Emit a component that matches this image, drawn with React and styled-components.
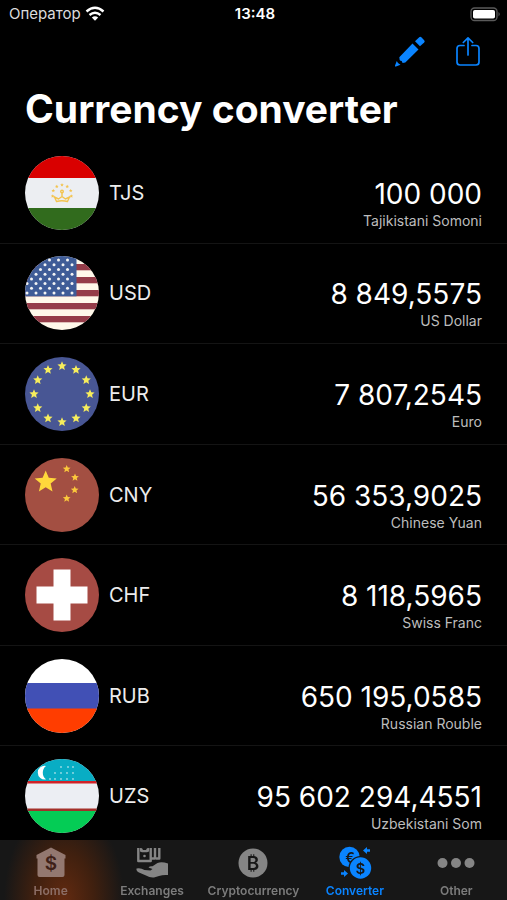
import React from 'react'

import styled, { createGlobalStyle } from 'styled-components'

const star = (cx, cy, r) => {
  const points = []
  for (let i = 0; i < 10; i++) {
    const radius = i % 2 ? r * 0.45 : r
    const angle = (Math.PI / 5) * i - Math.PI / 2
    points.push(`${cx + radius * Math.cos(angle)},${cy + radius * Math.sin(angle)}`)
  }
  return points.join(' ')
}

const ring = (count, radius, cx, cy, from, to) =>
  Array.from({ length: count }, (_, i) => {
    const a = ((from + ((to - from) * i) / (count - 1)) * Math.PI) / 180
    return [cx + radius * Math.cos(a), cy + radius * Math.sin(a)]
  })

const usStars = []
for (let row = 0; row < 8; row++) {
  for (let col = 0; col < 6; col++) {
    usStars.push([47 - col * 9 - (row % 2 ? 4.5 : 0), 37 - row * 4.7])
  }
}

const uzStars = [
  [43, 8], [48, 8], [36, 8],
  [30, 14], [36, 14], [42, 14], [48, 14],
  [25, 20], [30, 20], [36, 20], [42, 20], [48, 20],
]

const flags = {
  TJS: (
    <>
      <rect width="74" height="74" fill="#eceef2" />
      <rect width="74" height="22" fill="#d90000" />
      <rect y="52" width="74" height="22" fill="#316b1d" />
      <g fill="#f3c34d">
        {ring(7, 9.5, 37, 38.5, -190, 10).map(([x, y]) => (
          <polygon key={x} points={star(x, y, 1.9)} />
        ))}
      </g>
      <g fill="none" stroke="#f3c34d" strokeWidth="1.4">
        <path d="M29.5 41l2 4.500q5.500-1.500 11 0l2-4.500-4 2-3.500-2.500-3.500 2.500zM37 40.500V37" />
        <circle cx="37" cy="35.500" r="1.300" />
      </g>
    </>
  ),
  USD: (
    <>
      <rect width="74" height="74" fill="#fff8ea" />
      {[8, 21, 34, 47, 60].map((y) => (
        <rect key={y} y={y} width="74" height="6.300" fill="#953c49" />
      ))}
      <rect width="51.500" height="40.300" fill="#3f5c97" />
      {usStars.map(([x, y]) => (
        <circle key={`${x}-${y}`} cx={x} cy={y} r="1.500" fill="#f4f4f4" />
      ))}
    </>
  ),
  EUR: (
    <>
      <rect width="74" height="74" fill="#485694" />
      {ring(13, 28, 37, 37, 0, 360).slice(1).map(([x, y]) => (
        <polygon key={`${x}-${y}`} points={star(x, y, 4.800)} fill="#f7ed5c" />
      ))}
    </>
  ),
  CNY: (
    <>
      <rect width="74" height="74" fill="#a34f42" />
      <polygon points={star(20.700, 24, 11.600)} fill="#ffd83b" />
      {[[41.7, 11], [50, 19.5], [49.7, 32], [41.7, 40.5]].map(([x, y]) => (
        <polygon key={y} points={star(x, y, 4.100)} fill="#fbc83c" />
      ))}
    </>
  ),
  CHF: (
    <>
      <rect width="74" height="74" fill="#a64b44" />
      <path d="M28.500 11.500h17v17h17v17h-17v17h-17v-17h-17v-17h17z" fill="#fff" />
    </>
  ),
  RUB: (
    <>
      <rect width="74" height="74" fill="#fff" />
      <rect y="24" width="74" height="26" fill="#4150b5" />
      <rect y="49.500" width="74" height="25" fill="#ff3d00" />
    </>
  ),
  UZS: (
    <>
      <rect width="74" height="74" fill="#eceef3" />
      <rect width="74" height="22" fill="#08adc4" />
      <rect y="22" width="74" height="2.500" fill="#d02228" />
      <rect y="49.500" width="74" height="2.500" fill="#a3302a" />
      <rect y="52" width="74" height="22" fill="#04cc55" />
      <path d="M21 7a6.800 6.800 0 1 0 0 13.300a8.500 8.500 0 0 1 0-13.300z" fill="#fff" />
      {uzStars.map(([x, y]) => (
        <circle key={`${x}-${y}`} cx={x} cy={y} r=".9" fill="#9fdde6" />
      ))}
    </>
  ),
}

const rates = [
  { code: 'TJS', amount: '100 000', name: 'Tajikistani Somoni' },
  { code: 'USD', amount: '8 849,5575', name: 'US Dollar' },
  { code: 'EUR', amount: '7 807,2545', name: 'Euro' },
  { code: 'CNY', amount: '56 353,9025', name: 'Chinese Yuan' },
  { code: 'CHF', amount: '8 118,5965', name: 'Swiss Franc' },
  { code: 'RUB', amount: '650 195,0585', name: 'Russian Rouble' },
  { code: 'UZS', amount: '95 602 294,4551', name: 'Uzbekistani Som' },
]

const HomeIcon = () => (
  <svg width="40" height="34" viewBox="0 0 40 34">
    <path d="M20 1.500L34.500 9v3.500h-1V29q0 2-2 2h-23q-2 0-2-2V12.500h-1V9z" fill="#937870" />
    <Sign x="20" y="24" size={19} fill="#3f2118">$</Sign>
  </svg>
)

const ExchangesIcon = () => (
  <svg width="40" height="34" viewBox="0 0 40 34">
    <g fill="none" stroke="#858585" strokeWidth="2.400" strokeLinejoin="round">
      <path d="M6.300 2v13h12.400V2" />
      <path d="M23 2v10.500h-4M27.300 2v10.500H24" />
    </g>
    <path d="M8 2l2 .3 1 1.700h3l1-1.700 2-.3v3.500l-2 .8h-5l-2-.8z" fill="#858585" />
    <circle cx="12.500" cy="10" r="1.300" fill="#858585" />
    <path d="M4.500 22.500q4-1 8 1.500l6 .5 2-1.500-4-1.500q1-1.500 4-1.200l5-3.300q4-1.800 10.500.5v11.500q-5-.5-9 1l-5 1.500q-4 .5-8-2l-7-3q-3-1.500-2.500-4z" fill="#858585" />
  </svg>
)

const CryptoIcon = () => (
  <svg width="40" height="34" viewBox="0 0 40 34">
    <circle cx="20" cy="17" r="14.500" fill="#858585" />
    <Sign x="20" y="24" size={19} fill="#171717">₿</Sign>
  </svg>
)

const ConverterIcon = () => (
  <svg width="40" height="34" viewBox="0 0 40 34">
    <circle cx="14.500" cy="11" r="10.200" fill="#0a84ff" />
    <Sign x="15" y="16.500" size={14} fill="#171717">€</Sign>
    <circle cx="25.500" cy="22" r="12" fill="#171717" />
    <circle cx="25.500" cy="22" r="10.700" fill="#0a84ff" />
    <Sign x="25.500" y="27.500" size={15} fill="#171717">$</Sign>
    <path d="M28 4.500l4-3.500v2.200h3v2.600h-3V8zM13 27.500L9 24v2.200H6v2.600h3V31z" fill="#0a84ff" />
  </svg>
)

const OtherIcon = () => (
  <svg width="40" height="34" viewBox="0 0 40 34">
    {[6.5, 20, 33.5].map((x) => (
      <circle key={x} cx={x} cy="17" r="5" fill="#858585" />
    ))}
  </svg>
)

const tabs = [
  { label: 'Home', icon: <HomeIcon />, color: '#8c6e66' },
  { label: 'Exchanges', icon: <ExchangesIcon /> },
  { label: 'Cryptocurrency', icon: <CryptoIcon /> },
  { label: 'Converter', icon: <ConverterIcon />, color: '#0a84ff', active: true },
  { label: 'Other', icon: <OtherIcon /> },
]

function App() {
  return (
    <Page>
      <GlobalStyle />
      <StatusBar>
        <Carrier>
          Оператор
          <svg width="20" height="16" viewBox="0 0 20 16">
            <path d="M1.500 5.500Q10-1.800 18.500 5.500M4.500 9q5.500-4.600 11 0" fill="none" stroke="#fff" strokeWidth="2.400" />
            <path d="M6.800 11.500q3.200-2.500 6.400 0L10 14.700z" fill="#fff" />
          </svg>
        </Carrier>
        <Time>13:48</Time>
        <Battery>
          <svg width="31" height="15" viewBox="0 0 31 15">
            <rect x="1" y="1" width="26" height="12.500" rx="3.500" fill="none" stroke="#5a5a5a" strokeWidth="1.300" />
            <rect x="3" y="3" width="22" height="8.500" rx="1.800" fill="#fff" />
            <path d="M28.500 5q2.500 2.200 0 4.500z" fill="#5a5a5a" />
          </svg>
        </Battery>
      </StatusBar>

      <Toolbar>
        <IconButton aria-label="Edit">
          <svg width="32" height="32" viewBox="0 0 32 32">
            <g fill="#0a84ff">
              <path d="M21 5.200L25.200 1.300q1.200-1 2.400.2l2.600 2.700q1.100 1.200 0 2.300L26 10.300z" />
              <path d="M18.500 7.500l6 6L11.300 26.500l-2.600.4q-.8-.6-1-1.800-1.500-.3-2-1.200l-.4-2.700z" />
              <path d="M2.800 25q.8 2.600 3.700 3.700L2 30.600q-1.200.2-1-1z" />
            </g>
          </svg>
        </IconButton>
        <IconButton aria-label="Share">
          <svg width="32" height="32" viewBox="0 0 32 32" fill="none" stroke="#0a84ff" strokeWidth="1.700" strokeLinecap="round" strokeLinejoin="round">
            <path d="M12 9.500H8q-3 0-3 3V26q0 3 3 3h16q3 0 3-3V12.500q0-3-3-3h-4" />
            <path d="M16 19V2M11.300 6.500L16 1.800l4.700 4.700" />
          </svg>
        </IconButton>
      </Toolbar>

      <Title>Currency converter</Title>

      <List>
        {rates.map((rate) => (
          <Row key={rate.code}>
            <Flag viewBox="0 0 74 74">{flags[rate.code]}</Flag>
            <Code>{rate.code}</Code>
            <Value>
              <Amount>{rate.amount}</Amount>
              <Name>{rate.name}</Name>
            </Value>
          </Row>
        ))}
      </List>

      <TabBar>
        {tabs.map((tab) => (
          <Tab key={tab.label} href={`#${tab.label.toLowerCase()}`} $color={tab.color} aria-current={tab.active ? 'page' : undefined}>
            {tab.icon}
            {tab.label}
          </Tab>
        ))}
      </TabBar>
    </Page>
  )
}

const GlobalStyle = createGlobalStyle`
  * {
    box-sizing: border-box;
  }
  body {
    margin: 0;
    background: #000;
    color: #fff;
    font-family: Inter, "Liberation Sans", sans-serif;
  }
`

const Page = styled.div`
  display: flex;
  flex-direction: column;
  min-height: 100vh;
  padding-bottom: 53px;
`

const StatusBar = styled.header`
  display: grid;
  grid-template-columns: 1fr auto 1fr;
  align-items: center;
  height: 28px;
  padding: 0 6px 0 9px;
`
const Carrier = styled.div`
  display: flex;
  align-items: center;
  gap: 4px;
  font-size: 15px;
  line-height: 20px;
  color: #dcdcdc;
`
const Time = styled.div`
  font-size: 15px;
  line-height: 20px;
  font-weight: 600;
`
const Battery = styled.div`
  display: flex;
  justify-content: flex-end;
`

const Toolbar = styled.div`
  display: flex;
  justify-content: flex-end;
  gap: 26px;
  height: 54px;
  padding: 8px 23px 0;
`
const IconButton = styled.button`
  width: 32px;
  height: 32px;
  padding: 0;
  border: none;
  background: none;
  cursor: pointer;
`

const Title = styled.h1`
  margin: 0;
  padding: 0 25px;
  font-size: 39px;
  line-height: 54px;
  font-weight: 700;
`

const List = styled.ul`
  flex: 1;
  display: flex;
  flex-direction: column;
  margin: 7px 0 0;
  padding: 0;
  list-style: none;
`
const Row = styled.li`
  flex: 1;
  display: flex;
  align-items: center;
  min-height: 90px;
  padding: 0 25px;
  border-bottom: 1px solid #141414;
`
const Flag = styled.svg`
  flex: none;
  width: 74px;
  height: 74px;
  border-radius: 50%;
`
const Code = styled.span`
  margin-left: 10px;
  font-size: 20px;
  color: #ececec;
`
const Value = styled.div`
  flex: 1;
  padding-top: 22px;
  text-align: right;
`
const Amount = styled.div`
  font-size: 28px;
  line-height: 34px;
  white-space: nowrap;
`
const Name = styled.div`
  font-size: 14px;
  line-height: 20px;
  color: #bdbdbd;
`

const TabBar = styled.nav`
  position: fixed;
  left: 0;
  right: 0;
  bottom: 0;
  display: grid;
  grid-template-columns: repeat(5, 1fr);
  height: 60px;
  padding-top: 6px;
  background: radial-gradient(ellipse 60px 96px at 64px 60px, #622a10, #40200f 50%, #171717) no-repeat #171717;
`
const Tab = styled.a`
  display: flex;
  flex-direction: column;
  align-items: center;
  font-size: 12px;
  line-height: 22px;
  font-weight: 600;
  white-space: nowrap;
  text-decoration: none;
  color: ${(props) => props.$color || '#7c7c7c'};
`
const Sign = styled.text.attrs({ textAnchor: 'middle' })`
  font-size: ${(props) => props.size}px;
  font-weight: 600;
`

export default App
